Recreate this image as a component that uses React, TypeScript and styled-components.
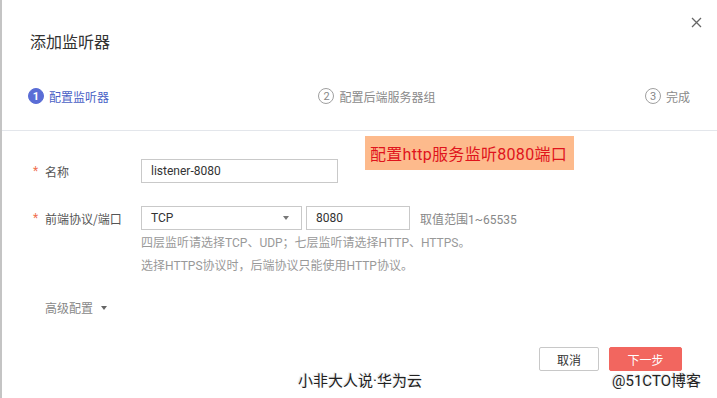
import React from "react";
import styled, { createGlobalStyle } from "styled-components";

const Global = createGlobalStyle`
  html, body { margin: 0; padding: 0; background: #fff; }
  body { font-family: Roboto, "Noto Sans CJK SC", sans-serif; }
  * { box-sizing: border-box; }
`;

const Dialog = styled.div`
  position: relative;
  width: 717px;
  height: 398px;
  border-left: 2px solid #c4c4c4;
  background: #fff;
  overflow: hidden;
`;

const Header = styled.div`
  padding: 30px 27px 26px 26px;
  border-bottom: 1px solid #e3e6eb;
`;

const Title = styled.div`
  font-family: "Noto Sans CJK SC", sans-serif;
  font-size: 16px;
  line-height: 22px;
  color: #333;
  padding-left: 2px;
`;

const Close = styled.button`
  position: absolute;
  top: 17px;
  right: 15px;
  width: 11px;
  height: 11px;
  padding: 0;
  border: 0;
  background: none;
  display: flex;
`;

const Steps = styled.div`
  margin-top: 36px;
  display: flex;
  justify-content: space-between;
  align-items: center;
  height: 16px;
`;

const Step = styled.div<{ $active?: boolean }>`
  display: flex;
  align-items: center;
  gap: 5px;
  font-size: 12px;
  font-family: "Noto Sans CJK SC", sans-serif;
  color: ${(p) => (p.$active ? "#4a61c6" : "#8a8a8a")};
`;

const StepNum = styled.span<{ $active?: boolean }>`
  width: 16px;
  height: 16px;
  border-radius: 50%;
  display: flex;
  align-items: center;
  justify-content: center;
  font-family: Roboto, sans-serif;
  font-size: 11px;
  font-weight: ${(p) => (p.$active ? 700 : 400)};
  background: ${(p) => (p.$active ? "#5a6dd6" : "#fff")};
  color: ${(p) => (p.$active ? "#fff" : "#888")};
  border: 1px solid ${(p) => (p.$active ? "#5a6dd6" : "#a0a0a0")};
`;

const Form = styled.div`
  padding: 28px 35px 0 31px;
  display: flex;
  flex-direction: column;
`;

const Row = styled.div<{ $mt?: number }>`
  display: flex;
  align-items: center;
  margin-top: ${(p) => p.$mt ?? 0}px;
`;

const Label = styled.div`
  width: 108px;
  flex: none;
  font-size: 12px;
  font-family: "Noto Sans CJK SC", sans-serif;
  color: #555;
  display: flex;
  align-items: center;
`;

const Star = styled.span`
  color: #f07050;
  font-size: 12px;
  width: 12px;
  font-family: Roboto, sans-serif;
`;

const TextBox = styled.div<{ $w: number; $ml?: number }>`
  width: ${(p) => p.$w}px;
  height: 24px;
  margin-left: ${(p) => p.$ml ?? 0}px;
  border: 1px solid #c9c9c9;
  display: flex;
  align-items: center;
  justify-content: space-between;
  padding: 0 12px 0 9px;
  font-size: 12px;
  color: #333;
`;

const Caret = styled.span`
  width: 0;
  height: 0;
  border-left: 3.5px solid transparent;
  border-right: 3.5px solid transparent;
  border-top: 4px solid #777;
`;

const Range = styled.span`
  margin-left: 10px;
  font-size: 12px;
  color: #888;
`;

const Help = styled.div`
  margin: 2px 0 0 108px;
  font-size: 12px;
  line-height: 23px;
  color: #999;
`;

const Advanced = styled.div`
  margin-top: 20px;
  padding-left: 12px;
  font-size: 12px;
  line-height: 20px;
  color: #888;
  display: flex;
  align-items: center;
  gap: 8px;
  font-family: "Noto Sans CJK SC", sans-serif;
`;

const SmallCaret = styled(Caret)`
  border-top-color: #666;
`;

const Footer = styled.div`
  margin-top: 29px;
  display: flex;
  justify-content: flex-end;
  gap: 10px;
`;

const Button = styled.button<{ $primary?: boolean }>`
  height: 24px;
  width: ${(p) => (p.$primary ? 73 : 60)}px;
  font-size: 12px;
  font-family: "Noto Sans CJK SC", sans-serif;
  border-radius: 2px;
  border: 1px solid ${(p) => (p.$primary ? "#f2665f" : "#c8c8c8")};
  background: ${(p) => (p.$primary ? "#f2665f" : "#fff")};
  color: ${(p) => (p.$primary ? "#fff" : "#333")};
  padding: 0;
`;

const Note = styled.div`
  position: absolute;
  left: 363px;
  top: 136px;
  width: 209px;
  height: 34px;
  background: #fdba8c;
  color: #e0141c;
  font-size: 16px;
  font-family: Roboto, "Noto Sans CJK SC", sans-serif;
  display: flex;
  align-items: center;
  padding-left: 5px;
  letter-spacing: 0.3px;
`;

const Watermark = styled.div<{ $left: number }>`
  position: absolute;
  left: ${(p) => p.$left}px;
  top: 371px;
  font-size: 15px;
  line-height: 20px;
  font-family: Roboto, "Noto Sans CJK SC", sans-serif;
  color: #222;
  text-shadow: 1px 1px 1px #fff, -1px -1px 1px #ddd;
`;

export default function App() {
  return (
    <>
      <Global />
      <Dialog>
        <Header>
          <Title>添加监听器</Title>
          <Steps>
            <Step $active>
              <StepNum $active>1</StepNum>配置监听器
            </Step>
            <Step>
              <StepNum>2</StepNum>配置后端服务器组
            </Step>
            <Step>
              <StepNum>3</StepNum>完成
            </Step>
          </Steps>
        </Header>
        <Close aria-label="close">
          <svg width="11" height="11" viewBox="0 0 11 11">
            <path d="M1 1 L10 10 M10 1 L1 10" stroke="#666" strokeWidth="1.3" />
          </svg>
        </Close>
        <Form>
          <Row>
            <Label>
              <Star>*</Star>名称
            </Label>
            <TextBox $w={197}>listener-8080</TextBox>
          </Row>
          <Row $mt={23}>
            <Label>
              <Star>*</Star>前端协议/端口
            </Label>
            <TextBox $w={161}>
              TCP
              <Caret />
            </TextBox>
            <TextBox $w={104} $ml={4}>
              8080
            </TextBox>
            <Range>取值范围1~65535</Range>
          </Row>
          <Help>
            四层监听请选择TCP、UDP；七层监听请选择HTTP、HTTPS。
            <br />
            选择HTTPS协议时，后端协议只能使用HTTP协议。
          </Help>
          <Advanced>
            高级配置
            <SmallCaret />
          </Advanced>
          <Footer>
            <Button>取消</Button>
            <Button $primary>下一步</Button>
          </Footer>
        </Form>
        <Note>配置http服务监听8080端口</Note>
        <Watermark $left={296}>小非大人说·华为云</Watermark>
        <Watermark $left={610}>@51CTO博客</Watermark>
      </Dialog>
    </>
  );
}
